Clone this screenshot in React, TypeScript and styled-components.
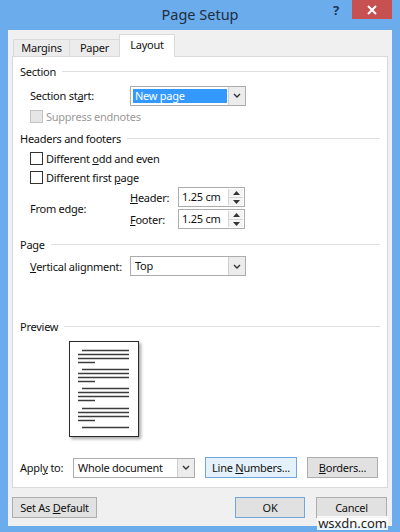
import React from "react";
import styled, { createGlobalStyle } from "styled-components";

const GlobalStyle = createGlobalStyle`
  html, body {
    margin: 0;
    padding: 0;
  }
  body {
    font-family: "Noto Sans", "Open Sans", sans-serif;
    font-size: 11px;
    letter-spacing: -0.25px;
    color: #111;
  }
`;

// window chrome

const Window = styled.div`
  position: relative;
  width: 400px;
  height: 532px;
  box-sizing: border-box;
  background: #6aacec;
  padding: 0 8px 6px 8px;
  display: flex;
  flex-direction: column;
`;

const TitleBar = styled.div`
  height: 30px;
  flex: none;
  display: grid;
  grid-template-columns: 1fr auto 1fr;
`;

const Title = styled.div`
  font-size: 14.5px;
  letter-spacing: 0;
  color: #1f2f40;
  line-height: 28px;
`;

const Controls = styled.div`
  display: flex;
  justify-content: flex-end;
  align-items: flex-start;
`;

const HelpButton = styled.div`
  width: 16px;
  margin-right: 8px;
  height: 20px;
  line-height: 20px;
  text-align: center;
  font-weight: bold;
  font-size: 13px;
  color: #1c3553;
`;

const CloseButton = styled.div`
  width: 40px;
  height: 19px;
  background: #c75050;
  display: flex;
  align-items: center;
  justify-content: center;
`;

const Body = styled.div`
  flex: 1;
  background: #f0f0f0;
  padding: 4px 4px 0 4px;
  display: flex;
  flex-direction: column;
`;

// tabs

const TabStrip = styled.div`
  height: 22px;
  display: flex;
  align-items: flex-end;
  padding-left: 1px;
`;

const Tab = styled.div<{ $active?: boolean; $w: number }>`
  box-sizing: border-box;
  width: ${(p) => p.$w}px;
  height: ${(p) => (p.$active ? 23 : 17)}px;
  margin-bottom: ${(p) => (p.$active ? -1 : 0)}px;
  margin-right: -1px;
  position: relative;
  z-index: ${(p) => (p.$active ? 1 : 0)};
  border: 1px solid #d9d9d9;
  border-bottom: none;
  background: ${(p) => (p.$active ? "#fff" : "#ececec")};
  text-align: center;
  line-height: ${(p) => (p.$active ? 19 : 15)}px;
`;

const Panel = styled.div`
  height: 432px;
  box-sizing: border-box;
  background: #fff;
  border: 1px solid #d9d9d9;
  padding: 7px 7px 9px 7px;
  display: flex;
  flex-direction: column;
`;

// panel parts

const Heading = styled.div<{ $mt?: number }>`
  height: 16px;
  margin-top: ${(p) => p.$mt ?? 0}px;
  display: flex;
  align-items: center;
  gap: 6px;
  &::after {
    content: "";
    flex: 1;
    height: 1px;
    background: #dfdfdf;
  }
`;

const Row = styled.div<{ $mt?: number; $h?: number; $indent?: number }>`
  height: ${(p) => p.$h ?? 16}px;
  margin-top: ${(p) => p.$mt ?? 0}px;
  padding-left: ${(p) => p.$indent ?? 10}px;
  display: flex;
  align-items: center;
`;

const Label = styled.span<{ $w?: number; $disabled?: boolean }>`
  width: ${(p) => (p.$w ? `${p.$w}px` : "auto")};
  flex: none;
  color: ${(p) => (p.$disabled ? "#9a9a9a" : "inherit")};
`;

const CheckBox = styled.span<{ $disabled?: boolean }>`
  width: 13px;
  height: 13px;
  box-sizing: border-box;
  border: 1px solid ${(p) => (p.$disabled ? "#c4c4c4" : "#333")};
  background: ${(p) => (p.$disabled ? "#e6e6e6" : "#fff")};
  margin-right: 3px;
  flex: none;
`;

const Select = styled.div<{ $w: number }>`
  width: ${(p) => p.$w}px;
  height: 20px;
  box-sizing: border-box;
  border: 1px solid #acacac;
  background: #fff;
  display: flex;
  flex: none;
`;

const SelectValue = styled.div<{ $selected?: boolean }>`
  flex: 1;
  margin: 2px 1px 2px 2px;
  padding: 0 2px;
  line-height: 14px;
  background: ${(p) => (p.$selected ? "#3399ff" : "transparent")};
  color: ${(p) => (p.$selected ? "#fff" : "inherit")};
`;

const SelectArrow = styled.div`
  width: 16px;
  background: #ececec;
  border-left: 1px solid #cfcfcf;
  display: flex;
  align-items: center;
  justify-content: center;
`;

const EdgeGrid = styled.div`
  margin-top: 2px;
  padding-left: 10px;
  display: grid;
  grid-template-columns: 100px 48px 67px;
  grid-template-rows: 20px 20px;
  row-gap: 2px;
  align-items: center;
`;

const EdgeLabel = styled.span`
  grid-row: 1 / span 2;
`;

const Spinner = styled.div`
  width: 67px;
  height: 20px;
  box-sizing: border-box;
  border: 1px solid #acacac;
  background: #fff;
  display: flex;
`;

const SpinValue = styled.div`
  flex: 1;
  padding-left: 3px;
  line-height: 18px;
`;

const SpinButtons = styled.div`
  width: 14px;
  margin: 1px 1px 1px 0;
  border-left: 1px solid #d4d4d4;
  display: flex;
  flex-direction: column;
`;

const SpinHalf = styled.div<{ $down?: boolean }>`
  flex: 1;
  display: flex;
  align-items: center;
  justify-content: center;
  background: #f4f4f4;
  border-top: ${(p) => (p.$down ? "1px solid #d4d4d4" : "none")};
`;

const PreviewPage = styled.div`
  margin: 7px 0 0 49px;
  width: 70px;
  height: 96px;
  box-sizing: border-box;
  border: 1px solid #2a2a2a;
  background: #fff;
  box-shadow: 2px 2px 3px rgba(0, 0, 0, 0.35);
  flex: none;
`;

const Button = styled.div<{ $w: number; $accent?: boolean; $focus?: boolean }>`
  width: ${(p) => p.$w}px;
  height: 21px;
  box-sizing: border-box;
  border: 1px solid ${(p) => (p.$accent || p.$focus ? "#6fa6dc" : "#adadad")};
  background: ${(p) => (p.$accent ? "#e5f1fb" : "#e1e1e1")};
  display: flex;
  align-items: center;
  justify-content: center;
  flex: none;
`;

const Footer = styled.div`
  margin-top: 9px;
  height: 21px;
  display: flex;
  padding-right: 1px;
`;

const FooterRight = styled.div`
  margin-left: auto;
  display: flex;
  gap: 11px;
`;

const Watermark = styled.div`
  position: absolute;
  right: 12px;
  bottom: 2px;
  padding: 0 1px;
  background: rgba(255, 255, 255, 0.85);
  color: #222;
  font-size: 13px;
  letter-spacing: 0;
  line-height: 14px;
`;

// drawings

const Chevron = () => (
  <svg width="8" height="5" viewBox="0 0 8 5">
    <path d="M1 1 L4 4 L7 1" fill="none" stroke="#333" strokeWidth="1.4" />
  </svg>
);

const Triangle = ({ down }: { down?: boolean }) => (
  <svg width="7" height="4" viewBox="0 0 7 4">
    <path d={down ? "M0 0 H7 L3.5 4 Z" : "M0 4 H7 L3.5 0 Z"} fill="#333" />
  </svg>
);

const groups = [9, 28, 47, 67];

const PageLines = () => (
  <svg width="68" height="94" viewBox="0 0 68 94">
    {groups.map((y) => (
      <g key={y} stroke="#3c3c3c" strokeWidth="1.5">
        <line x1="12" x2="59" y1={y - 0.5} y2={y - 0.5} />
        <line x1="8" x2="59" y1={y + 3.5} y2={y + 3.5} />
        <line x1="8" x2="59" y1={y + 7.5} y2={y + 7.5} />
        <line x1="8" x2="25" y1={y + 11.5} y2={y + 11.5} />
      </g>
    ))}
    <line x1="12" x2="59" y1="85.5" y2="85.5" stroke="#3c3c3c" strokeWidth="1.5" />
  </svg>
);

const SpinBox = ({ value }: { value: string }) => (
  <Spinner>
    <SpinValue>{value}</SpinValue>
    <SpinButtons>
      <SpinHalf>
        <Triangle />
      </SpinHalf>
      <SpinHalf $down>
        <Triangle down />
      </SpinHalf>
    </SpinButtons>
  </Spinner>
);

const App = () => {
  return (
    <Window>
      <GlobalStyle />
      <TitleBar>
        <div />
        <Title>Page Setup</Title>
        <Controls>
          <HelpButton>?</HelpButton>
          <CloseButton>
            <svg width="10" height="10" viewBox="0 0 10 10">
              <path d="M1 1 L9 9 M9 1 L1 9" stroke="#fff" strokeWidth="2" />
            </svg>
          </CloseButton>
        </Controls>
      </TitleBar>
      <Body>
        <TabStrip>
          <Tab $w={57}>Margins</Tab>
          <Tab $w={51}>Paper</Tab>
          <Tab $w={56} $active>
            Layout
          </Tab>
        </TabStrip>
        <Panel>
          <Heading>Section</Heading>
          <Row $mt={6} $h={20}>
            <Label $w={100}>
              Section st<u>a</u>rt:
            </Label>
            <Select $w={116}>
              <SelectValue $selected>New page</SelectValue>
              <SelectArrow>
                <Chevron />
              </SelectArrow>
            </Select>
          </Row>
          <Row $mt={3}>
            <CheckBox $disabled />
            <Label $disabled>Suppress endnotes</Label>
          </Row>

          <Heading $mt={6}>Headers and footers</Heading>
          <Row $mt={4}>
            <CheckBox />
            <Label>
              Different <u>o</u>dd and even
            </Label>
          </Row>
          <Row $mt={3}>
            <CheckBox />
            <Label>
              Different first <u>p</u>age
            </Label>
          </Row>
          <EdgeGrid>
            <EdgeLabel>From edge:</EdgeLabel>
            <span>
              <u>H</u>eader:
            </span>
            <SpinBox value="1.25 cm" />
            <span>
              <u>F</u>ooter:
            </span>
            <SpinBox value="1.25 cm" />
          </EdgeGrid>

          <Heading $mt={7}>Page</Heading>
          <Row $mt={4} $h={20}>
            <Label $w={100}>
              <u>V</u>ertical alignment:
            </Label>
            <Select $w={116}>
              <SelectValue>Top</SelectValue>
              <SelectArrow>
                <Chevron />
              </SelectArrow>
            </Select>
          </Row>

          <Heading $mt={42}>Preview</Heading>
          <PreviewPage>
            <PageLines />
          </PreviewPage>

          <Row $mt={20} $h={21} $indent={0}>
            <Label $w={53}>
              Appl<u>y</u> to:
            </Label>
            <Select $w={122}>
              <SelectValue>Whole document</SelectValue>
              <SelectArrow>
                <Chevron />
              </SelectArrow>
            </Select>
            <Button $w={92} $accent style={{ marginLeft: 10 }}>
              Line&nbsp;<u>N</u>umbers...
            </Button>
            <Button $w={71} style={{ marginLeft: 10 }}>
              <u>B</u>orders...
            </Button>
          </Row>
        </Panel>
        <Footer>
          <Button $w={85}>
            Set As&nbsp;<u>D</u>efault
          </Button>
          <FooterRight>
            <Button $w={70} $focus>
              OK
            </Button>
            <Button $w={71}>Cancel</Button>
          </FooterRight>
        </Footer>
      </Body>
      <Watermark>wsxdn.com</Watermark>
    </Window>
  );
};

export default App;
